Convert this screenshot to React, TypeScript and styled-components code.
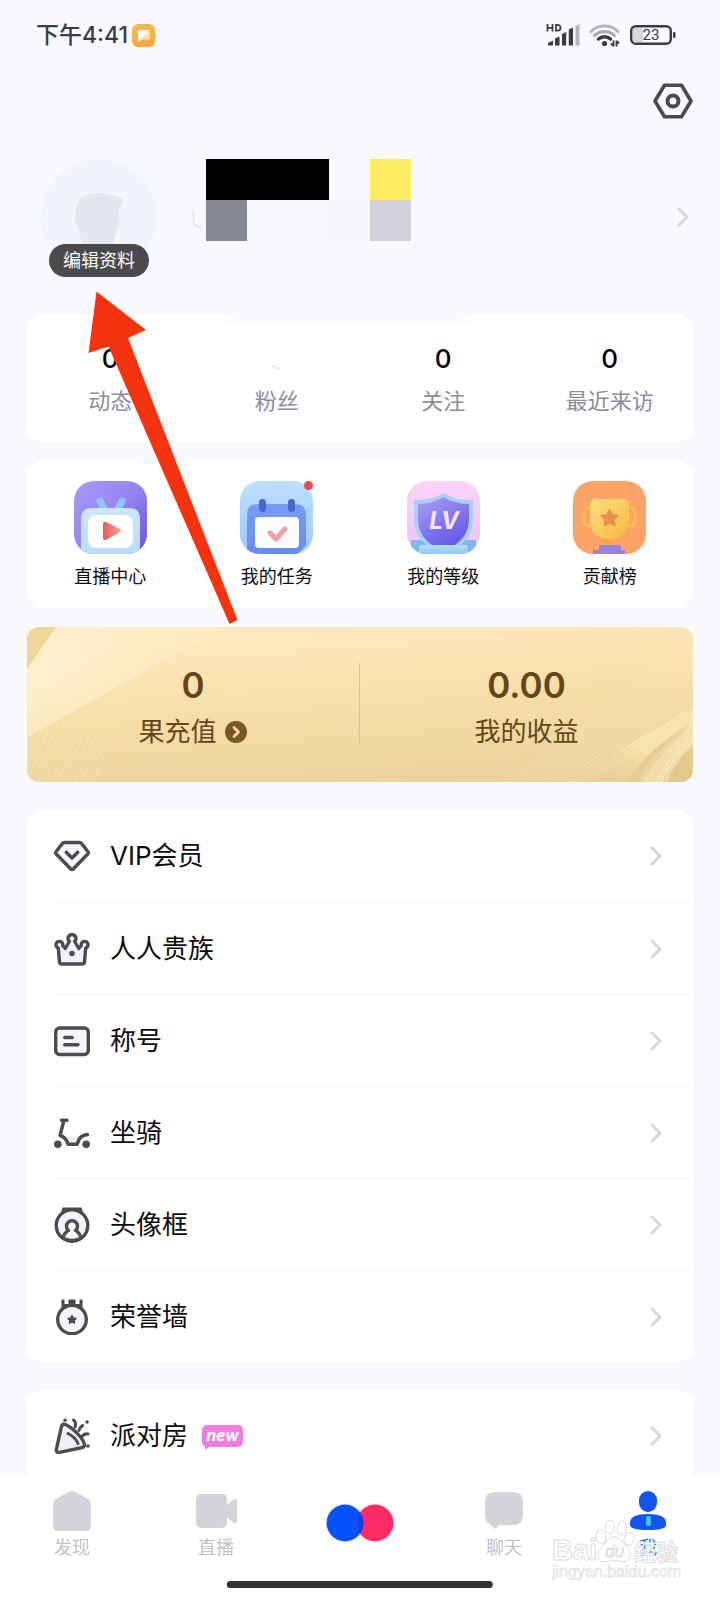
import React from "react";
import styled, { createGlobalStyle, css } from "styled-components";

const GlobalStyle = createGlobalStyle`
  * { box-sizing: border-box; }
  body {
    margin: 0;
    background: #f8f9fd;
    color: #0c0c0e;
    font-family: Inter, "Noto Sans CJK SC", sans-serif;
  }
  button {
    border: 0;
    padding: 0;
    background: none;
    color: inherit;
    font: inherit;
    cursor: pointer;
  }
  a { color: inherit; text-decoration: none; }
  svg { display: block; flex: none; }
`;

const Screen = styled.div`
  position: relative;
  display: flex;
  flex-direction: column;
  height: 100vh;
  overflow: hidden;
`;

const StatusBar = styled.header`
  display: flex;
  align-items: center;
  justify-content: space-between;
  flex: none;
  height: 70px;
  padding: 0 44px 0 36px;
  color: #3c3c40;
`;

const StatusGroup = styled.div<{ $gap: number }>`
  display: flex;
  align-items: center;
  gap: ${(p) => p.$gap}px;
`;

const Clock = styled.span`
  font-size: 23px;
  line-height: 30px;
  font-weight: 500;
`;

const Content = styled.main`
  flex: 1;
  min-height: 0;
  overflow-y: auto;
  scrollbar-width: none;
  padding: 0 27px;
`;

const Toolbar = styled.div`
  display: flex;
  justify-content: flex-end;
  padding-top: 12px;
`;

const Profile = styled.section`
  display: flex;
  align-items: flex-start;
  height: 194px;
  padding: 39px 4px 0 14px;
`;

const AvatarBox = styled.div`
  position: relative;
  width: 116px;
  height: 116px;
`;

const EditButton = styled.button`
  position: absolute;
  left: 8px;
  top: 85px;
  width: 100px;
  height: 33px;
  border-radius: 17px;
  background: #494a4c;
  color: #fff;
  font-size: 18px;
  line-height: 33px;
  white-space: nowrap;
`;

const NameBlock = styled.div`
  display: flex;
  flex: 1;
  align-items: flex-end;
  gap: 4px;
  padding-left: 35px;
`;

const NameRemnant = styled.svg`
  margin-bottom: 12px;
`;

const Mosaic = styled.div`
  display: grid;
  grid-template-columns: repeat(5, 41px);
  grid-auto-rows: 41px;
`;

const MosaicCell = styled.span<{ $color: string }>`
  background: ${(p) => p.$color};
`;

const ProfileLink = styled.a`
  align-self: flex-start;
  padding-top: 48px;
`;

const Card = styled.section`
  position: relative;
  border-radius: 16px;
  background: #fff;
`;

const StatsCard = styled(Card)`
  display: grid;
  grid-template-columns: repeat(4, 1fr);
  height: 128px;
  padding-top: 29px;
  margin-bottom: 19px;
`;

const CardNotch = styled.span`
  position: absolute;
  top: 0;
  left: 28%;
  right: 32%;
  height: 9px;
  background: linear-gradient(90deg, #f8f9fd00, #f8f9fd 12%, #f8f9fd 88%, #f8f9fd00);
`;

const Stat = styled.a`
  display: flex;
  flex-direction: column;
  align-items: center;
`;

const StatValue = styled.strong`
  display: flex;
  align-items: center;
  height: 32px;
  font-size: 26px;
  line-height: 32px;
  font-weight: 500;
  color: #000;
`;

const StatLabel = styled.span`
  margin-top: 10px;
  font-size: 22px;
  line-height: 32px;
  color: #8b8c9c;
`;

const FeatureCard = styled(Card)`
  display: grid;
  grid-template-columns: repeat(4, 1fr);
  height: 147px;
  padding-top: 20px;
  margin-bottom: 19px;
`;

const Feature = styled.button`
  display: flex;
  flex-direction: column;
  align-items: center;
  font-size: 18px;
  line-height: 26px;
`;

const FeatureIcon = styled.span`
  position: relative;
  margin-bottom: 10px;
`;

const RedDot = styled.span`
  position: absolute;
  top: 0;
  right: 0;
  width: 9px;
  height: 9px;
  border-radius: 50%;
  background: #eb4a50;
`;

const GoldCard = styled.section`
  position: relative;
  display: grid;
  grid-template-columns: 1fr 1fr;
  height: 155px;
  padding-top: 36px;
  margin-bottom: 28px;
  border-radius: 12px;
  overflow: hidden;
  background: linear-gradient(176deg, #ffe8bb 12%, #f6dfa8 50%, #e9d09a 100%);
  color: #65461a;
`;

const GoldPattern = styled.svg<{ $side: "left" | "right" }>`
  position: absolute;
  top: 0;
  ${(p) => (p.$side === "left" ? "left: 0;" : "right: 0;")}
  height: 155px;
`;

const Balance = styled.a<{ $divided?: boolean }>`
  position: relative;
  display: flex;
  flex-direction: column;
  align-items: center;
  height: 82px;
  ${(p) =>
    p.$divided &&
    css`
      border-right: 1px solid #d9c38e;
    `}
`;

const BalanceValue = styled.strong`
  font-size: 35px;
  line-height: 44px;
  font-weight: 600;
`;

const BalanceLabel = styled.span`
  display: flex;
  align-items: center;
  gap: 7px;
  margin-top: 6px;
  font-size: 26px;
  line-height: 38px;
`;

const MenuCard = styled(Card)`
  margin-bottom: 28px;
`;

const MenuRow = styled.a`
  display: flex;
  align-items: center;
  height: 92px;
  margin-left: 27px;
  padding-right: 31px;
  & + & { border-top: 1px solid #f6f6f9; }
`;

const MenuLabel = styled.span`
  flex: 1;
  display: flex;
  align-items: center;
  gap: 14px;
  padding-left: 20px;
  font-size: 26px;
  line-height: 38px;
`;

const NewBadge = styled.span`
  position: relative;
  width: 41px;
  height: 22px;
  border-radius: 5px;
  background: #f07de0;
  color: #fff;
  font-size: 16px;
  line-height: 20px;
  font-weight: 700;
  font-style: italic;
  text-align: center;
  &::after {
    content: "";
    position: absolute;
    left: 3px;
    top: 20px;
    border-top: 5px solid #f07de0;
    border-right: 7px solid transparent;
  }
`;

const TabBar = styled.nav`
  position: relative;
  flex: none;
  display: grid;
  grid-template-columns: repeat(5, 1fr);
  height: 125px;
  padding-top: 15px;
  background: #fff;
`;

const Tab = styled.a<{ $active?: boolean }>`
  display: flex;
  flex-direction: column;
  align-items: center;
  gap: 3px;
  font-size: 18px;
  line-height: 26px;
  color: ${(p) => (p.$active ? "#1689ae" : "#c3c3c8")};
`;

const CenterTab = styled(Tab)`
  padding-top: 14px;
`;

const HomeIndicator = styled.span`
  position: absolute;
  left: 50%;
  bottom: 12px;
  width: 37%;
  height: 7px;
  border-radius: 4px;
  background: #323234;
  transform: translateX(-50%);
`;

const Watermark = styled.div`
  position: absolute;
  right: 38px;
  bottom: 18px;
  width: 130px;
  pointer-events: none;
`;

const Arrow = styled.svg`
  position: absolute;
  left: 87px;
  top: 290px;
  pointer-events: none;
`;

const Chevron = () => (
  <svg width="12" height="20" viewBox="0 0 12 20" fill="none" stroke="#d5d7e2" strokeWidth="3" strokeLinecap="round" strokeLinejoin="round">
    <path d="M2 2l8 8-8 8" />
  </svg>
);

const MessageAppIcon = () => (
  <svg width="23" height="23" viewBox="0 0 23 23">
    <defs>
      <linearGradient id="msg" x1="0" y1="0" x2="0" y2="1">
        <stop offset="0" stopColor="#f2bb55" />
        <stop offset="1" stopColor="#fba63c" />
      </linearGradient>
    </defs>
    <rect width="23" height="23" rx="6" fill="url(#msg)" />
    <path d="M7.500 6H16Q17.500 6 17.500 7.500V14Q17.500 15.500 16 15.500H10L6 18V7.500Q6 6 7.500 6Z" fill="#ffe3b8" />
    <path d="M17 6.500L6 17V7.500Q6 6 7.500 6Z" fill="#fff" />
  </svg>
);

const SignalIcon = () => (
  <svg width="34" height="24" viewBox="0 0 34 24" fill="#3c3c40">
    <g fill="none" stroke="#3c3c40" strokeWidth="1.800">
      <path d="M1.500 1v7.500M6.500 1v7.500M1.500 4.800h5M10 1.900v5.700h1.700a2.850 2.850 0 0 0 0-5.700z" />
    </g>
    <path d="M2 22.500V20l5-2.500v5zM9 22.500v-7l4.500-2v9zM16 22.500V11l4.200-2v13.500zM22.800 22.500V6.500L27 4.500v18z" />
    <path d="M29.500 22.500V3l4-2v21.500z" fill="#b4b4b9" />
  </svg>
);

const WifiIcon = () => (
  <svg width="32" height="24" viewBox="0 0 32 24" fill="none">
    <path d="M2 8.500A19.500 19.500 0 0 1 29 8.500" stroke="#b4b4b9" strokeWidth="3" strokeLinecap="round" />
    <path d="M5.500 12.500A14.500 14.500 0 0 1 25.500 12.500" stroke="#a9a9af" strokeWidth="3" strokeLinecap="round" />
    <path d="M9.500 16A9 9 0 0 1 21.500 16" stroke="#3c3c40" strokeWidth="3.400" strokeLinecap="round" />
    <circle cx="15.500" cy="20.500" r="2.600" fill="#3c3c40" />
    <path d="M24.500 23.500v-6M24.500 23l-2.500-2.500M27.500 23.500v-6M27.500 18l2.500 2.500" stroke="#3c3c40" strokeWidth="1.800" />
  </svg>
);

const BatteryIcon = () => (
  <svg width="46" height="20" viewBox="0 0 46 20">
    <rect x="3" y="3" width="10" height="14" rx="2" fill="#d7d8dc" />
    <rect x="1.200" y="1.200" width="39.600" height="17.600" rx="4.500" fill="none" stroke="#3c3c40" strokeWidth="2.400" />
    <rect x="43" y="7" width="2.500" height="6" rx="1" fill="#3c3c40" />
    <text x="21" y="15.300" fontSize="15" textAnchor="middle" fontFamily="Roboto, sans-serif" fill="#3c3c40">23</text>
  </svg>
);

const SettingsIcon = () => (
  <svg width="40" height="38" viewBox="0 0 40 38" fill="none" stroke="#4a4a4d" strokeLinejoin="round">
    <path d="M11.500 3.200h17L38 19l-9.500 15.800h-17L2 19z" strokeWidth="3.600" />
    <circle cx="20" cy="19" r="5.500" strokeWidth="4" />
  </svg>
);

const AvatarArt = () => (
  <svg width="116" height="116" viewBox="0 0 116 116">
    <circle cx="58" cy="58" r="58" fill="#f2f5fe" />
    <path d="M37 68C33 65 33 58 35 52C35 39 45 34 59 34C68 34 76 39 82 38C82 45 79 48 78 51V57C80 63 78 69 76 70C75 78 72 84 69 87V98H44V87C40 83 39 76 38 74Z" fill="#e4e7f2" />
  </svg>
);

const LiveCenterIcon = () => (
  <svg width="73" height="73" viewBox="0 0 73 73">
    <defs>
      <linearGradient id="lc-bg" x1="0" y1="0" x2="1" y2="1">
        <stop offset="0" stopColor="#a99bfa" />
        <stop offset=".5" stopColor="#9583f1" />
        <stop offset="1" stopColor="#6553dc" />
      </linearGradient>
      <linearGradient id="lc-tv" x1="0" y1="0" x2="0" y2="1">
        <stop offset="0" stopColor="#cbe7fd" />
        <stop offset="1" stopColor="#b8dcfa" />
      </linearGradient>
      <linearGradient id="lc-play" x1="0" y1="0" x2="1" y2="0">
        <stop offset="0" stopColor="#eb5d5b" />
        <stop offset="1" stopColor="#f8a092" />
      </linearGradient>
      <clipPath id="lc-clip"><rect width="73" height="73" rx="20" /></clipPath>
    </defs>
    <g clipPath="url(#lc-clip)">
      <rect width="73" height="73" fill="url(#lc-bg)" />
      <path d="M26 20l6 11M48 20l-6 11" stroke="#8fc5f8" strokeWidth="7" strokeLinecap="round" />
      <path d="M7 73V38Q7 27 18 27H55Q66 27 66 38V73Z" fill="url(#lc-tv)" />
      <rect x="14" y="34" width="45" height="33" rx="8" fill="#fff" />
      <path d="M29 43Q29 40 32 41L46 48Q48 50 46 51L32 59Q29 60 29 57Z" fill="url(#lc-play)" />
    </g>
  </svg>
);

const TaskIcon = () => (
  <svg width="73" height="73" viewBox="0 0 73 73">
    <defs>
      <linearGradient id="tk-bg" x1="0" y1="0" x2="0" y2="1">
        <stop offset="0" stopColor="#bcdffc" />
        <stop offset="1" stopColor="#9dcbfb" />
      </linearGradient>
      <linearGradient id="tk-book" x1="0" y1="0" x2="0" y2="1">
        <stop offset="0" stopColor="#789cf4" />
        <stop offset="1" stopColor="#668cf0" />
      </linearGradient>
      <clipPath id="tk-clip"><rect width="73" height="73" rx="20" /></clipPath>
    </defs>
    <g clipPath="url(#tk-clip)">
      <rect width="73" height="73" fill="url(#tk-bg)" />
      <path d="M7 72V34Q7 23 18 23H55Q66 23 66 34V64L58 73H17Z" fill="url(#tk-book)" />
      <rect x="19" y="18" width="7" height="13" rx="3.500" fill="#4468c8" />
      <rect x="48" y="18" width="7" height="13" rx="3.500" fill="#4468c8" />
      <rect x="15" y="36" width="44" height="31" rx="4" fill="#fcfcff" />
      <path d="M30 52l6 6 9-10" stroke="#f2a0a4" strokeWidth="5" fill="none" strokeLinecap="round" strokeLinejoin="round" />
    </g>
  </svg>
);

const LevelIcon = () => (
  <svg width="73" height="73" viewBox="0 0 73 73">
    <defs>
      <linearGradient id="lv-bg" x1="0" y1="0" x2="0" y2="1">
        <stop offset="0" stopColor="#fbd3fa" />
        <stop offset="1" stopColor="#eec5f5" />
      </linearGradient>
      <linearGradient id="lv-sh" x1="0" y1="0" x2=".6" y2="1">
        <stop offset="0" stopColor="#aaa0f5" />
        <stop offset="1" stopColor="#695bea" />
      </linearGradient>
      <linearGradient id="lv-base" x1="0" y1="0" x2="0" y2="1">
        <stop offset="0" stopColor="#b5dcf8" />
        <stop offset="1" stopColor="#86c0ed" />
      </linearGradient>
      <clipPath id="lv-clip"><rect width="73" height="73" rx="20" /></clipPath>
    </defs>
    <g clipPath="url(#lv-clip)">
      <rect width="73" height="73" fill="url(#lv-bg)" />
      <path d="M4 59H69V73H4Z" fill="#7fb8eb" />
      <path d="M36.500 12Q50 20 66 19V36Q67 56 50 66H23Q6 56 7 36V19Q24 20 36.500 12Z" fill="#a9cff7" />
      <path d="M36.500 16Q48 23 62 23V38Q62 54 48 64H25Q11 54 11 38V23Q25 23 36.500 16Z" fill="url(#lv-sh)" />
      <rect x="12" y="64" width="49" height="12" rx="3" fill="url(#lv-base)" />
      <text x="37" y="48" fontSize="24" fontWeight="700" fontStyle="italic" textAnchor="middle" fill="#f9e6fd">LV</text>
    </g>
  </svg>
);

const TrophyIcon = () => (
  <svg width="73" height="73" viewBox="0 0 73 73">
    <defs>
      <linearGradient id="tr-cup" x1="0" y1="0" x2="1" y2="1">
        <stop offset="0" stopColor="#ffdd80" />
        <stop offset="1" stopColor="#f7b93f" />
      </linearGradient>
      <clipPath id="tr-clip"><rect width="73" height="73" rx="20" /></clipPath>
    </defs>
    <g clipPath="url(#tr-clip)">
      <rect width="73" height="73" fill="#fca368" />
      <rect x="11" y="26" width="15" height="19" rx="6" fill="none" stroke="#f7bc50" strokeWidth="3.500" />
      <rect x="47" y="26" width="15" height="19" rx="6" fill="none" stroke="#f7bc50" strokeWidth="3.500" />
      <path d="M33 52h7l1 14H32z" fill="#efad3c" />
      <path d="M17 24Q17 18 23 18H50Q56 18 56 24V40Q54 58 36.500 58Q19 58 17 40Z" fill="url(#tr-cup)" />
      <path d="M36.500 29l2.500 5 5.500.8-4 3.900.9 5.500-4.900-2.600-4.900 2.600.9-5.500-4-3.900 5.500-.8z" fill="#e8914b" stroke="#e8914b" strokeWidth="2" strokeLinejoin="round" />
      <path d="M26 64h22v5h4v4H20v-4h6z" fill="#9a83dd" />
    </g>
  </svg>
);

const MenuSvg = ({ children }: { children: React.ReactNode }) => (
  <svg width="36" height="36" viewBox="0 0 36 36" fill="none" stroke="#4c4c4f" strokeWidth="3.400" strokeLinecap="round" strokeLinejoin="round">
    {children}
  </svg>
);

const VipIcon = () => (
  <MenuSvg>
    <path d="M10.500 4.500H25.500Q26.800 4.500 27.600 5.500L34 13.800Q34.600 15 33.800 16L19.200 31Q18 32 16.800 31L2.200 16Q1.400 15 2 13.800L8.400 5.500Q9.200 4.500 10.500 4.500Z" fill="#f5f6fd" />
    <path d="M12.300 14.300L18 20l5.700-5.700" />
  </MenuSvg>
);

const CrownIcon = () => (
  <MenuSvg>
    <path d="M5.500 31L4.300 17A3.400 3.400 0 1 1 8.700 14.500L11.200 17.500L15.300 10.500A4 4 0 1 1 20.700 10.500L24.800 17.500L27.300 14.500A3.400 3.400 0 1 1 31.700 17L30.500 31Q30.300 33 28 33H8Q5.700 33 5.500 31Z" fill="#f0f1fa" />
    <circle cx="18" cy="22.500" r="2.700" fill="#4c4c4f" stroke="none" />
  </MenuSvg>
);

const TitleIcon = () => (
  <MenuSvg>
    <rect x="1.700" y="5" width="32.600" height="26.500" rx="4" fill="#f5f5fc" />
    <path d="M10.700 14.500h7.500M10.700 21.700h13.300" />
  </MenuSvg>
);

const ScooterIcon = () => (
  <MenuSvg>
    <path d="M9 22L14 29H23L27 21Z" fill="#ecedf8" stroke="none" />
    <path d="M7.500 5.300h5.500M10 5.300L6 20.500C10 21.500 12.500 24 14 29.300H23.300C24.500 23 28 19.800 33.500 19.500" />
    <circle cx="3.800" cy="29.300" r="3.800" fill="#4c4c4f" stroke="none" />
    <circle cx="32.200" cy="29.300" r="3.800" fill="#4c4c4f" stroke="none" />
  </MenuSvg>
);

const FrameIcon = () => (
  <MenuSvg>
    <circle cx="18" cy="18.500" r="15.800" fill="#f1f2fb" />
    <path d="M8.500 0.500H27.500L29 5.500Q18 0 7 5.500Z" fill="#4c4c4f" stroke="none" />
    <path d="M9 31C10 27 11.500 25 14.500 23.500A5.500 5.500 0 1 1 21.500 23.500C24.500 25 26 27 27 31Q18 36 9 31Z" fill="#fff" />
  </MenuSvg>
);

const MedalIcon = () => (
  <MenuSvg>
    <path d="M7.500 0.500h3V5H14.500V0.500h7V5H25.500V0.500h3V9H7.500Z" fill="#4c4c4f" stroke="none" />
    <circle cx="18" cy="20.500" r="14.300" fill="#f3f4fc" />
    <path d="M18 16.500l1.300 2.500 2.800.4-2 2 .5 2.800-2.600-1.300-2.600 1.300.5-2.800-2-2 2.800-.4z" fill="#4c4c4f" strokeWidth="1.400" />
  </MenuSvg>
);

const PartyIcon = () => (
  <MenuSvg>
    <path d="M11.500 6.500C17 9 29 19 30.500 26.500C30.600 28.500 30 29 28.500 29.500L5.500 34.300Q2 34.800 2.300 31.500L7.500 8.500Q8.500 5.500 11.500 6.500Z" fill="#eeeff8" />
    <path d="M14 15.500C18.500 17.500 22 21 24 25.500M19.500 2C22 4 22 6.500 21 9M28.500 7.500C26.500 9 25.500 10.500 25 12.500M34 16C31.500 15.500 29.500 16.500 28 18.500" strokeWidth="3" />
    <g fill="#4c4c4f" stroke="none">
      <circle cx="11" cy="2.300" r="1.800" />
      <circle cx="33" cy="4" r="1.800" />
      <circle cx="34" cy="28" r="1.800" />
    </g>
  </MenuSvg>
);

const stats = [
  { label: "动态", value: "0" },
  { label: "粉丝", value: null },
  { label: "关注", value: "0" },
  { label: "最近来访", value: "0" },
];

const features = [
  { label: "直播中心", icon: <LiveCenterIcon /> },
  { label: "我的任务", icon: <TaskIcon />, dot: true },
  { label: "我的等级", icon: <LevelIcon /> },
  { label: "贡献榜", icon: <TrophyIcon /> },
];

const menu = [
  { label: "VIP会员", icon: <VipIcon /> },
  { label: "人人贵族", icon: <CrownIcon /> },
  { label: "称号", icon: <TitleIcon /> },
  { label: "坐骑", icon: <ScooterIcon /> },
  { label: "头像框", icon: <FrameIcon /> },
  { label: "荣誉墙", icon: <MedalIcon /> },
];

const mosaic = [
  "#000", "#020202", "#000", "transparent", "#fbeb60",
  "#868893", "#f9fafe", "#f9fafe", "#f6f7fd", "#d1d2dc",
];

const leftRays = Array.from({ length: 19 }, (_, i) => i);
const rightWaves = Array.from({ length: 15 }, (_, i) => i);

const GoldDecor = () => (
  <>
    <GoldPattern $side="left" width="210" viewBox="0 0 210 155" aria-hidden="true">
      <defs>
        <radialGradient id="ray" gradientUnits="userSpaceOnUse" cx="14" cy="46" r="150">
          <stop offset="0" stopColor="#fffbe6" stopOpacity=".45" />
          <stop offset="1" stopColor="#fffbe6" stopOpacity=".04" />
        </radialGradient>
      </defs>
      <path d="M0 0H29L0 42Z" fill="#eccd8d" opacity=".7" />
      <path d="M29 0H195L0 110V42Z" fill="url(#ray)" />
      <g stroke="#fff8e0" strokeWidth="1" opacity=".45">
        {leftRays.map((i) => (
          <path key={i} d={`M${50 + i * 8} 0L0 ${56 + i * 3}`} />
        ))}
      </g>
      <g stroke="#fff3cf" strokeWidth="1" opacity=".28">
        {leftRays.slice(0, 14).map((i) => (
          <path key={i} d={`M${8 + i * 8} ${104 - i * 4}L${i * 6 - 12} 155`} />
        ))}
      </g>
    </GoldPattern>
    <GoldPattern $side="right" width="190" viewBox="0 0 190 155" aria-hidden="true">
      <defs>
        <linearGradient id="silk" x1="0" y1="1" x2="1" y2="0">
          <stop offset="0" stopColor="#dfc382" stopOpacity=".2" />
          <stop offset=".5" stopColor="#fbedb8" stopOpacity=".6" />
          <stop offset="1" stopColor="#fff0c3" stopOpacity=".4" />
        </linearGradient>
      </defs>
      <path d="M82 155C112 122 130 116 190 80V98C160 112 140 130 124 155Z" fill="url(#silk)" />
      <path d="M135 155C145 130 162 118 190 95V116C177 128 168 138 160 155Z" fill="#faedbd" opacity=".45" />
      <path d="M124 155C140 130 160 112 190 95C165 122 150 135 140 155Z" fill="#dcc07e" opacity=".3" />
      <path d="M165 155Q174 132 190 118V155Z" fill="#dfbf7b" opacity=".5" />
      <g fill="none" stroke="#fff5d3" strokeWidth="1" opacity=".3">
        {rightWaves.map((i) => (
          <path key={i} d={`M${i * 6} 155C${60 + i * 5} ${118 + i} ${110 + i * 3} ${76 + i * 2} 190 ${6 + i * 5}`} />
        ))}
      </g>
      <g fill="none" stroke="#fffbe9" strokeWidth="1" opacity=".6">
        <path d="M158 155C164 138 176 126 190 114" />
        <path d="M162 155C168 139 178 128 190 118" />
        <path d="M154 155C160 138 174 122 190 110" />
      </g>
    </GoldPattern>
  </>
);

export default function App() {
  return (
    <Screen>
      <GlobalStyle />
      <StatusBar>
        <StatusGroup $gap={4}>
          <Clock>下午4:41</Clock>
          <MessageAppIcon />
        </StatusGroup>
        <StatusGroup $gap={9}>
          <SignalIcon />
          <WifiIcon />
          <BatteryIcon />
        </StatusGroup>
      </StatusBar>

      <Content>
        <Toolbar>
          <button type="button" aria-label="设置"><SettingsIcon /></button>
        </Toolbar>

        <Profile>
          <AvatarBox>
            <AvatarArt />
            <EditButton type="button">编辑资料</EditButton>
          </AvatarBox>
          <NameBlock>
            <NameRemnant width="10" height="18" viewBox="0 0 10 18" fill="none" stroke="#e4e4ea" strokeWidth="2">
              <path d="M1.500 0V10Q2 16 9 16.500" />
            </NameRemnant>
            <Mosaic>
              {mosaic.map((color, i) => <MosaicCell key={i} $color={color} />)}
            </Mosaic>
          </NameBlock>
          <ProfileLink href="#profile" aria-label="个人主页"><Chevron /></ProfileLink>
        </Profile>

        <StatsCard>
          <CardNotch />
          {stats.map((s) => (
            <Stat key={s.label} href="#stats">
              <StatValue>
                {s.value ?? (
                  <svg width="12" height="22" viewBox="0 0 12 22" fill="none" stroke="#ececf0" strokeWidth="2">
                    <path d="M1 17Q4 21 9 20" />
                  </svg>
                )}
              </StatValue>
              <StatLabel>{s.label}</StatLabel>
            </Stat>
          ))}
        </StatsCard>

        <FeatureCard>
          {features.map((f) => (
            <Feature key={f.label} type="button">
              <FeatureIcon>
                {f.icon}
                {f.dot && <RedDot />}
              </FeatureIcon>
              {f.label}
            </Feature>
          ))}
        </FeatureCard>

        <GoldCard>
          <GoldDecor />
          <Balance href="#recharge" $divided>
            <BalanceValue>0</BalanceValue>
            <BalanceLabel>
              果充值
              <svg width="24" height="24" viewBox="0 0 24 24">
                <circle cx="12" cy="12" r="11" fill="#7c5629" />
                <path d="M10 7.500l4.500 4.500-4.500 4.500" fill="none" stroke="#f8e3b1" strokeWidth="2.600" strokeLinecap="round" strokeLinejoin="round" />
              </svg>
            </BalanceLabel>
          </Balance>
          <Balance href="#income">
            <BalanceValue>0.00</BalanceValue>
            <BalanceLabel>我的收益</BalanceLabel>
          </Balance>
        </GoldCard>

        <MenuCard>
          {menu.map((m) => (
            <MenuRow key={m.label} href="#menu">
              {m.icon}
              <MenuLabel>{m.label}</MenuLabel>
              <Chevron />
            </MenuRow>
          ))}
        </MenuCard>

        <MenuCard>
          <MenuRow href="#party">
            <PartyIcon />
            <MenuLabel>派对房<NewBadge>new</NewBadge></MenuLabel>
            <Chevron />
          </MenuRow>
        </MenuCard>
      </Content>

      <TabBar>
        <Tab href="#discover">
          <svg width="42" height="42" viewBox="0 0 42 42">
            <path d="M18 2Q21 0 24 2L37 9Q40 11 40 14V35Q40 41 34 41H8Q2 41 2 35V14Q2 11 5 9Z" fill="#d3d4da" />
          </svg>
          发现
        </Tab>
        <Tab href="#live">
          <svg width="42" height="42" viewBox="0 0 42 42" fill="#d3d4da">
            <rect x="1" y="4" width="31" height="34" rx="5" />
            <path d="M31 16L39 9Q42 8 42 11V31Q42 34 39 33L31 27Z" />
          </svg>
          直播
        </Tab>
        <CenterTab href="#match" aria-label="匹配">
          <svg width="68" height="38" viewBox="0 0 68 38">
            <circle cx="49" cy="19" r="18.500" fill="#ff2b62" />
            <circle cx="19" cy="19" r="18.500" fill="#0552fb" />
            <path d="M34 8.200A18.500 18.500 0 0 1 34 29.800A18.500 18.500 0 0 1 34 8.200Z" fill="#1d3fe0" />
          </svg>
        </CenterTab>
        <Tab href="#chat">
          <svg width="42" height="42" viewBox="0 0 42 42">
            <path d="M12 2H30Q40 2 40 12V25Q40 35 30 35H16L12 39L7 34Q2 33 2 25V12Q2 2 12 2Z" fill="#d3d4da" />
          </svg>
          聊天
        </Tab>
        <Tab href="#me" $active>
          <svg width="42" height="42" viewBox="0 0 42 42" fill="#1353ee">
            <rect x="12" y="1" width="18" height="21" rx="9" />
            <path d="M3 32Q4 24 21 24Q38 24 39 32V35Q39 40 21 40Q3 40 3 35Z" />
            <rect x="19" y="26" width="5" height="10" rx="2" fill="#3fc6f8" />
          </svg>
          我
        </Tab>
        <HomeIndicator />
      </TabBar>

      <Watermark>
        <svg width="130" height="64" viewBox="0 0 130 64" fill="#fff" fillOpacity=".85" stroke="#dedee1" strokeWidth="1" fontFamily='"Liberation Sans", "Noto Sans CJK SC", sans-serif'>
          <text x="0" y="42" fontSize="29" fontWeight="700">Bai</text>
          <ellipse cx="49" cy="19" rx="5" ry="7" transform="rotate(-15 49 19)" />
          <ellipse cx="58" cy="9" rx="4.500" ry="7" />
          <ellipse cx="70" cy="10" rx="4.500" ry="7" transform="rotate(10 70 10)" />
          <ellipse cx="77" cy="21" rx="5" ry="6.500" transform="rotate(15 77 21)" />
          <path d="M62 19C68 19 71 25 75 29C82 36 78 45 70 43.500Q62 41 54 43.500C45 45 43 36 49 30C54 25 56 19 62 19Z" />
          <text x="53" y="39" fontSize="17" fontStyle="italic">du</text>
          <text x="82" y="42" fontSize="22" fontWeight="700">经验</text>
          <text x="0" y="59" fontSize="16" strokeWidth="0.700">jingyan.baidu.com</text>
        </svg>
      </Watermark>

      <Arrow width="156" height="336" viewBox="87 290 156 336" aria-hidden="true">
        <path d="M96.500 291.500L146 330L128 338L237.500 620L229.500 624L108.500 346.500L88.500 353Z" fill="#f5340f" />
      </Arrow>
    </Screen>
  );
}
